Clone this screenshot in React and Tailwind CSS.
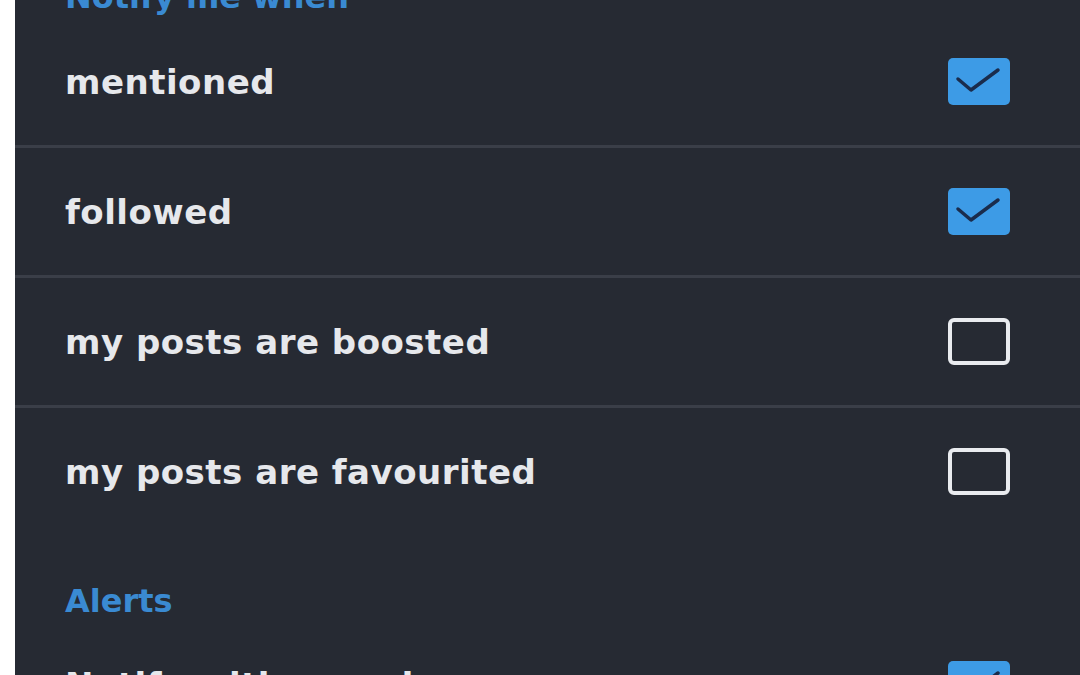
import React from "react";

const font = { fontFamily: '"DejaVu Sans", "Liberation Sans", sans-serif' };

function Check({ checked }) {
  if (checked) {
    return (
      <div className="w-[62px] h-[47px] rounded-[5px] bg-[#3d9be6] flex-none">
        <svg width="62" height="47" viewBox="0 0 62 47">
          <path d="M10 21 L23 32 L50 12" fill="none" stroke="#1a2c4c" strokeWidth="3.5" strokeLinecap="round" strokeLinejoin="round" />
        </svg>
      </div>
    );
  }
  return <div className="w-[62px] h-[47px] rounded-[6px] border-[4px] border-[#e9ebef] flex-none" />;
}

function Row({ label, checked, divider = true }) {
  return (
    <>
      <div className="h-[127px] flex items-center justify-between pl-[50px] pr-[70px]">
        <span className="text-[34px] leading-none font-bold tracking-[0.5px] text-[#e6e8ec]">{label}</span>
        <Check checked={checked} />
      </div>
      {divider && <div className="h-[3px] bg-[#3a3e48]" />}
    </>
  );
}

export default function App() {
  return (
    <div className="w-[1080px] h-[675px] bg-white overflow-hidden">
      <div className="ml-[15px] h-full bg-[#262a33] overflow-hidden" style={font}>
        <div className="h-[37px] pl-[50px]">
          <div className="-mt-[19px] text-[32px] leading-none font-bold text-[#3a8ad2]">Notify me when</div>
        </div>
        <Row label="mentioned" checked />
        <Row label="followed" checked />
        <Row label="my posts are boosted" checked={false} />
        <Row label="my posts are favourited" checked={false} divider={false} />
        <div className="h-[86px] pl-[50px] pt-[50px]">
          <div className="text-[32px] leading-none font-bold text-[#3a8ad2]">Alerts</div>
        </div>
        <Row label="Notify with sound" checked />
      </div>
    </div>
  );
}
